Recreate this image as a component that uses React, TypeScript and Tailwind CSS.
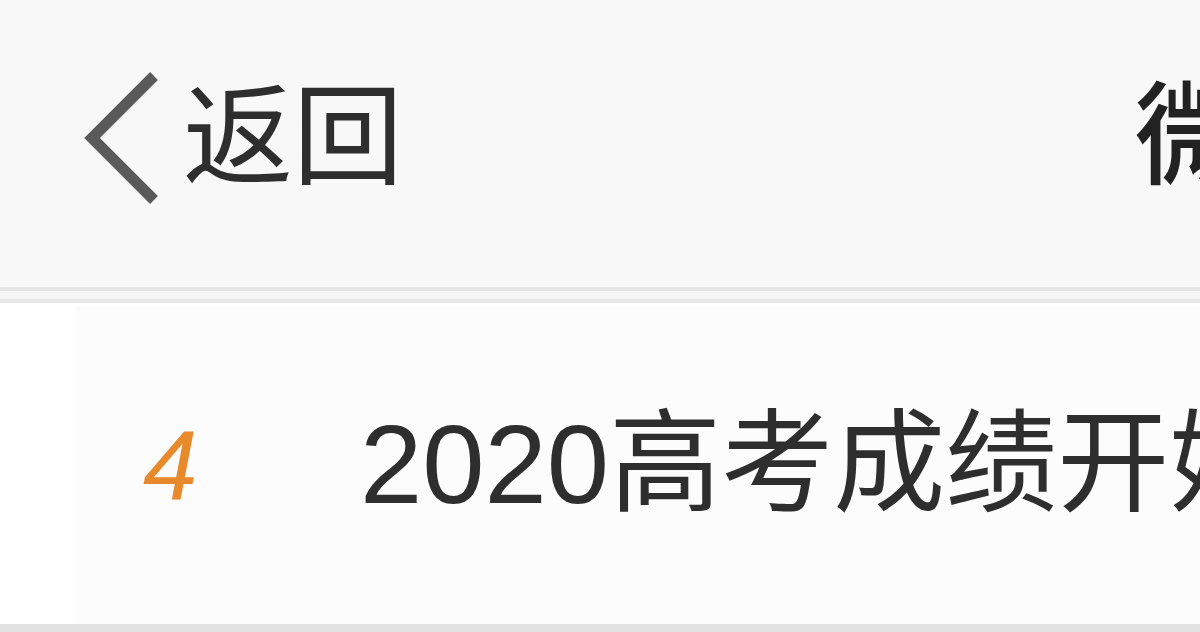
import React from "react";

export default function App() {
  const font = { fontFamily: '"Liberation Sans", "Noto Sans CJK SC", sans-serif' };
  return (
    <div className="w-[1200px] h-[632px] overflow-hidden bg-white flex flex-col" style={font}>
      <div className="h-[287px] shrink-0 bg-[#f8f8f8] flex items-center pb-[12px] whitespace-nowrap overflow-hidden">
        <div className="flex items-center pl-[82px] shrink-0">
          <svg width="80" height="140" viewBox="0 0 80 140" className="shrink-0">
            <polyline points="72,8 10,70 72,132" fill="none" stroke="#5a5a5a" strokeWidth="11" strokeLinecap="butt" strokeLinejoin="miter" />
          </svg>
          <span className="ml-[21px] text-[110px] leading-none text-[#2e2e2e]">返回</span>
        </div>
        <span className="ml-[732px] shrink-0 text-[112px] leading-none text-[#222] font-medium">微博热搜</span>
      </div>
      <div className="h-[19px] shrink-0 flex flex-col">
        <div className="h-[4px] bg-[#e6e6e6]" />
        <div className="h-[8px] bg-[#f6f6f6]" />
        <div className="h-[4px] bg-[#e8e8e8]" />
        <div className="h-[3px] bg-white" />
      </div>
      <div className="flex-1 flex bg-[#fcfcfc]">
        <div className="w-[75px] shrink-0 bg-white" />
        <div className="flex-1 flex items-center whitespace-nowrap overflow-hidden">
          <span className="w-[285px] shrink-0 pl-[68px] italic text-[98px] leading-none text-[#e8892b]">4</span>
          <span className="shrink-0 text-[112px] leading-none text-[#2e2e2e]">2020高考成绩开始查询</span>
        </div>
      </div>
      <div className="h-[8px] shrink-0 bg-[#e2e2e2]" />
    </div>
  );
}
